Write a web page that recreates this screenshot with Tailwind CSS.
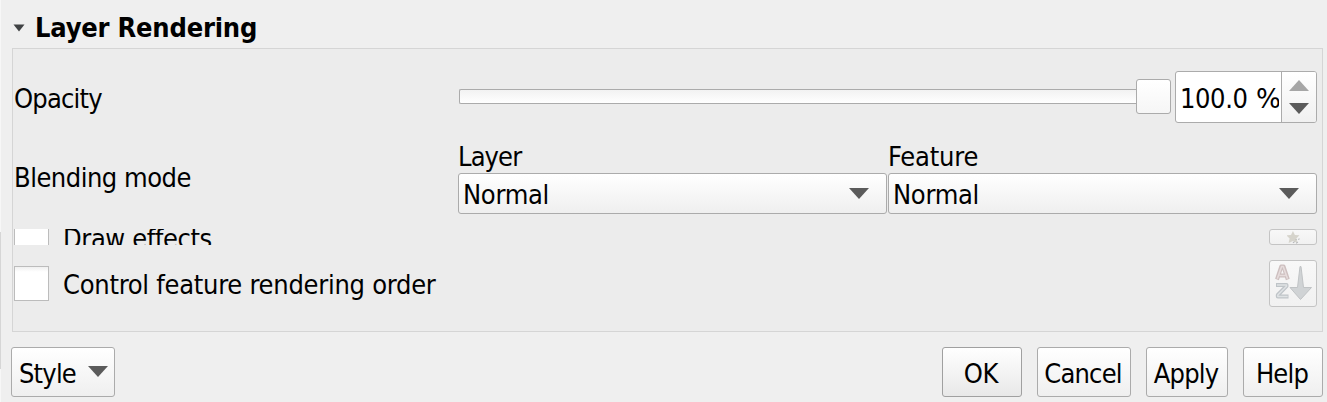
<!DOCTYPE html>
<html lang="en">
<head>
<meta charset="utf-8">
<title>Layer Rendering</title>
<script src="https://cdn.jsdelivr.net/npm/@tailwindcss/browser@4"></script>
</head>
<body class="relative flex h-[402px] w-[1327px] flex-col overflow-hidden bg-[#efefef] font-['DejaVu_Sans_Condensed','DejaVu_Sans',sans-serif] text-[27px] leading-[32px] tracking-[-0.8px] whitespace-nowrap text-black [font-stretch:condensed]">
<!-- edge of the neighbouring panel -->
<div class="absolute top-0 left-0 h-[402px] w-px bg-[#f7f7f7]"></div>
<div class="absolute top-[232px] left-0 h-[137px] w-px bg-[#d6d6d6]"></div>

<header class="flex h-12 shrink-0 items-start pt-3 pl-[13px]">
  <svg class="mt-3 h-[8px] w-[12px]" viewBox="0 0 12 8"><path d="M0.5 0.5h11L6 7.5z" fill="#404244"/></svg>
  <h1 class="ml-[10px] font-bold tracking-[-0.2px]">Layer Rendering</h1>
</header>

<main class="ml-3 h-[284px] w-[1311px] shrink-0 border border-[#d5d5d5] bg-[#ececec]">
  <section class="flex h-[92px] items-start pl-px">
    <label class="mt-[34px] w-[445px]">Opacity</label>
    <div class="mt-[30px] flex h-[35px] items-center">
      <div class="h-[15px] w-[677px] rounded-l-[2px] border border-r-0 border-[#ababab] bg-linear-to-b from-[#f2f2f2] to-white"></div>
      <div class="h-[35px] w-[35px] rounded-[3px] border border-[#ababab] bg-linear-to-b from-white to-[#f6f6f6]"></div>
    </div>
    <div class="mt-[22px] ml-1 flex h-[52px] w-[142px] overflow-hidden rounded-[3px] border border-[#ababab] bg-white">
      <div class="w-[103px] overflow-hidden pt-[11px] pl-1 tracking-[-0.4px]">100.0 <span class="inline-block origin-left scale-x-[1.08] pl-px">%</span></div>
      <div class="ml-[2px] flex flex-1 flex-col items-center gap-3 border-l border-[#ababab] bg-linear-to-b from-white to-[#f0f0f0] pt-[8px]">
        <svg class="h-[11px] w-5" viewBox="0 0 20 11"><path d="M0 11L10 0l10 11z" fill="#a6a6a6"/></svg>
        <svg class="h-[11px] w-5" viewBox="0 0 20 11"><path d="M0 0h20L10 11z" fill="#5b5b5b"/></svg>
      </div>
    </div>
  </section>

  <section class="flex h-[88px] items-start pl-px">
    <label class="mt-[21px] w-[444px] tracking-[-0.5px]">Blending mode</label>
    <div class="grid grid-cols-[429px_429px] gap-x-px">
      <span class="h-8 tracking-[-0.9px]">Layer</span>
      <span class="h-8 tracking-[-0.2px]">Feature</span>
      <div class="flex h-[41px] items-center justify-between rounded-[3px] border border-[#ababab] bg-linear-to-b from-white to-[#efefef] pr-[17px] pl-1">
        <span class="pt-0.5 tracking-[-0.3px]">Normal</span>
        <svg class="h-[11px] w-5" viewBox="0 0 20 11"><path d="M0 0h20L10 11z" fill="#5b5b5b"/></svg>
      </div>
      <div class="flex h-[41px] items-center justify-between rounded-[3px] border border-[#ababab] bg-linear-to-b from-white to-[#efefef] pr-[17px] pl-1">
        <span class="pt-0.5 tracking-[-0.3px]">Normal</span>
        <svg class="h-[11px] w-5" viewBox="0 0 20 11"><path d="M0 0h20L10 11z" fill="#5b5b5b"/></svg>
      </div>
    </div>
  </section>

  <section class="flex h-4 items-start overflow-hidden pl-px">
    <div class="h-4 w-[35px] border-x border-[#bcbcbc] bg-white"></div>
    <span class="-mt-[6px] ml-[14px] flex-1 tracking-[-0.4px] [font-variant-ligatures:none]">Draw effects</span>
    <button class="mr-[5px] flex h-4 w-12 items-center justify-center rounded-[3px] border border-[#c4c4c4] bg-linear-to-b from-[#f8f8f8] to-[#f1f1f1]">
      <svg class="h-[13px] w-[13px] shrink-0" viewBox="0 0 12 12"><path d="M5.500 0L7.300 3.700 11.500 4 8.600 7 9.500 11 5.500 9.200 1.500 11 2.400 7 -.5 4 3.700 3.700z" fill="#d6d4cc"/><path d="M5.500 11l1.500-1.200M8.500 11.500l1.500-1.500M10.500 8l1-1M8 8.500l.8-.8" stroke="#b4b6b8" fill="none"/></svg>
    </button>
  </section>

  <section class="mt-[15px] flex h-[47px] items-start pl-px">
    <div class="mt-[6px] h-[35px] w-[35px] border border-[#bcbcbc] bg-linear-to-b from-[#f0f0f0] via-white via-15% to-white"></div>
    <span class="mt-[9px] ml-[14px] flex-1 tracking-[-0.27px]">Control feature rendering order</span>
    <button class="mr-[5px] h-[47px] w-12 rounded-[3px] border border-[#c4c4c4] bg-linear-to-b from-[#f8f8f8] to-[#f1f1f1]">
      <svg class="h-[45px] w-[46px]" viewBox="0 0 46 45" stroke-linejoin="round">
        <g fill="none">
          <path d="M7 18.500L11.300 5.500h2.200L17.800 18.500M9 14.500h7" stroke="#cdbfbf" stroke-width="4"/>
          <path d="M7.300 17.700L11.600 5.500h1.600L17.500 17.700M9.500 14.500h6" stroke="#e6dcdc" stroke-width="1.600"/>
          <path d="M6 24h10.500v1.200L7.800 34v1.500H18.500" stroke="#bfc4c8" stroke-width="4"/>
          <path d="M7 24h9.500v1.200L7.800 34v1.500H17.700" stroke="#dfe2e4" stroke-width="1.500"/>
        </g>
        <path d="M30 5.500h1L33.500 26.500H41.500L30.500 38.500 20 26.500H27.500z" fill="#d0d3d5" stroke="#c0c3c5"/>
      </svg>
    </button>
  </section>
</main>

<footer class="mt-[15px] flex h-[50px] shrink-0 items-start pl-[11px]">
  <button class="flex h-[50px] w-[104px] items-center rounded-[3px] border border-[#ababab] bg-linear-to-b from-white to-[#efefef] pt-[3px] pl-[7px]">
    <span class="w-[69px] text-left">Style</span>
    <svg class="-mt-[4px] h-[11px] w-5" viewBox="0 0 20 11"><path d="M0 0h20L10 11z" fill="#5b5b5b"/></svg>
  </button>
  <div class="ml-[827px] flex gap-[15px]">
    <button class="h-[50px] w-20 rounded-[3px] border border-[#a0a0a0] bg-linear-to-b from-white to-[#e8e8e8] pt-[3px] pr-0.5 tracking-[-0.2px]">OK</button>
    <button class="h-[50px] w-[94px] rounded-[3px] border border-[#ababab] bg-linear-to-b from-white to-[#efefef] pt-[3px] pr-0.5">Cancel</button>
    <button class="h-[50px] w-[82px] rounded-[3px] border border-[#ababab] bg-linear-to-b from-white to-[#efefef] pt-[3px] pr-0.5">Apply</button>
    <button class="h-[50px] w-20 rounded-[3px] border border-[#ababab] bg-linear-to-b from-white to-[#efefef] pt-[3px] pr-0.5">Help</button>
  </div>
</footer>
</body>
</html>
